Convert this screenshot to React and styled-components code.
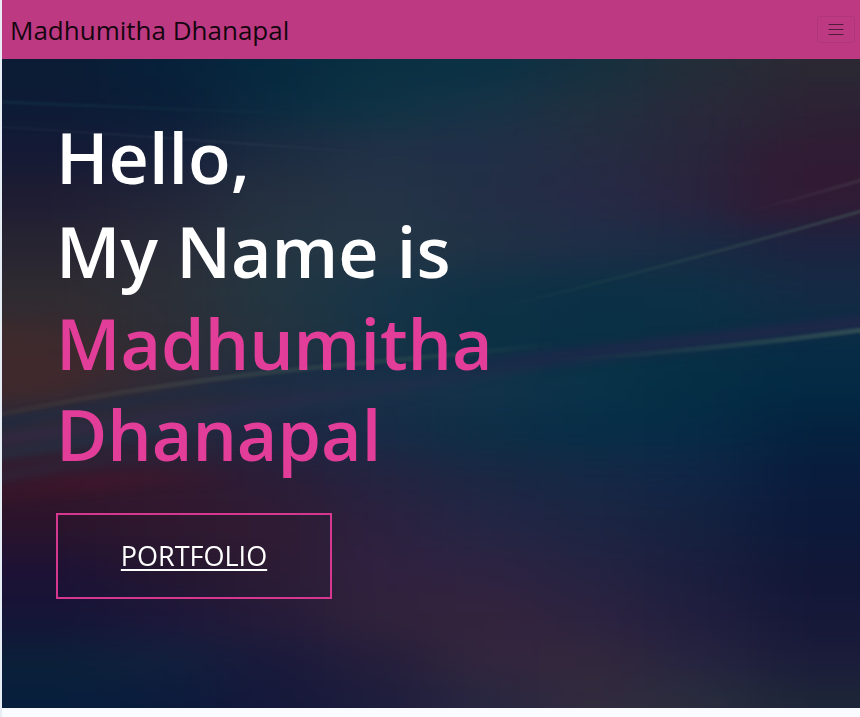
import React from "react";
import styled, { createGlobalStyle } from "styled-components";

const GlobalStyle = createGlobalStyle`
  *, *::before, *::after { box-sizing: border-box; }
  body {
    margin: 0;
    background: #f9fbfe;
    font-family: "Segoe UI", "Open Sans", "Noto Sans", sans-serif;
  }
`;

const Page = styled.div`
  display: flex;
  flex-direction: column;
  min-height: 100vh;
  border-left: 2px solid #e6edf5;
`;

const Navbar = styled.nav`
  display: flex;
  align-items: center;
  justify-content: space-between;
  min-height: 59px;
  padding: 8px 5px 8px 8px;
  background: #bd3a83;
`;

const Brand = styled.a`
  color: #15060f;
  font-size: 26px;
  line-height: 40px;
  text-decoration: none;
  white-space: nowrap;
`;

const Toggler = styled.button`
  display: flex;
  align-items: center;
  justify-content: center;
  width: 38px;
  height: 27px;
  padding: 0;
  background: transparent;
  border: 1px solid #ae3679;
  border-radius: 3px;
  color: #4f1b39;
  cursor: pointer;
`;

const Hero = styled.main`
  position: relative;
  flex: 1;
  overflow: hidden;
  padding: 51px 54px 96px;
  background: #1c2540;
`;

const Backdrop = styled.svg`
  position: absolute;
  inset: 0;
  width: 100%;
  height: 100%;
`;

const Content = styled.div`
  position: relative;
  display: flex;
  flex-direction: column;
  align-items: flex-start;
  max-width: 520px;
`;

const Title = styled.h1`
  margin: 0 0 33px;
  color: #fff;
  font-size: 70px;
  font-weight: 600;
  line-height: 94px;
`;

const Line = styled.span`
  display: block;
`;

const Name = styled.span`
  display: block;
  color: #e23e99;
  line-height: 91px;
`;

const PortfolioLink = styled.a`
  display: inline-flex;
  align-items: center;
  justify-content: center;
  min-width: 276px;
  padding: 20px 60px;
  border: 2px solid #d6388f;
  color: #fff;
  font-size: 27px;
  line-height: 42px;
  text-decoration: underline;
  text-decoration-thickness: 2px;
  text-underline-offset: 3px;
`;

const NextSection = styled.div`
  height: 9px;
  background: #f9fbfe;
`;

const columns = [0, 54, 161, 268, 375, 483, 590, 697, 804, 858];

/* Each row: vertical centre of the band, then its colours from left to right. */
const bands = [
  [10, "#0c1c34", "#07203a", "#06293f", "#0a3042", "#0a3145", "#15303f", "#232d38", "#2b2833"],
  [46, "#0d1b36", "#0a1e38", "#0a2a40", "#0e3344", "#173246", "#20303f", "#28293a", "#2c2234"],
  [92, "#141a35", "#151f3a", "#1c2b40", "#213046", "#202f47", "#252c42", "#28263b", "#2e1f35"],
  [139, "#1f1c33", "#222538", "#243040", "#243446", "#222f46", "#262a46", "#2a233e", "#301c35"],
  [186, "#272432", "#2a2b38", "#253441", "#253746", "#203145", "#1e2e46", "#1a2a43", "#1c2340"],
  [232, "#2f2b31", "#2c2f37", "#233641", "#173447", "#0f3145", "#0b3045", "#0c3045", "#152a44"],
  [279, "#382b30", "#2d2d36", "#24333f", "#163346", "#0b3144", "#0a3045", "#0a2f45", "#0a2c45"],
  [325, "#3c292e", "#302b36", "#202d43", "#1a3047", "#13334a", "#093248", "#042e44", "#032a44"],
  [372, "#272a3b", "#24293e", "#1f2843", "#172b46", "#0d2e46", "#072e47", "#062b46", "#04223f"],
  [418, "#37162a", "#34192e", "#2b1c37", "#242340", "#1b2743", "#152845", "#102545", "#091c3d"],
  [465, "#2a142b", "#2f182f", "#301b33", "#2b213f", "#242544", "#1c2543", "#14213f", "#0c193a"],
  [511, "#1d1235", "#24162f", "#2c1b33", "#302140", "#2d2341", "#242341", "#1b1e3e", "#111737"],
  [558, "#151437", "#1c173a", "#251b39", "#30223b", "#34233d", "#2c2340", "#201e3e", "#161838"],
  [604, "#0b2039", "#11203d", "#19193b", "#241e3b", "#32263d", "#33273c", "#252440", "#1b1c3a"],
  [640, "#071f3c", "#0b1b3c", "#15183b", "#1d1d3c", "#282640", "#322b3e", "#292d3d", "#1d2638"],
];

function AuroraBackdrop() {
  const cells = [];
  bands.forEach(([y, ...colours], row) => {
    const top = row === 0 ? -80 : (bands[row - 1][0] + y) / 2;
    const bottom = row === bands.length - 1 ? 740 : (bands[row + 1][0] + y) / 2;
    colours.forEach((fill, i) => {
      const left = i === 0 ? -120 : (columns[i] + columns[i + 1]) / 2;
      const right = i === 7 ? 980 : (columns[i + 1] + columns[i + 2]) / 2;
      cells.push(
        <rect key={`${row}-${i}`} x={left} y={top} width={right - left + 1} height={bottom - top + 1} fill={fill} />
      );
    });
  });
  return (
    <Backdrop viewBox="0 0 858 649" preserveAspectRatio="none" aria-hidden="true">
      <defs>
        <filter id="field" filterUnits="userSpaceOnUse" x="-120" y="-80" width="1100" height="820" colorInterpolationFilters="sRGB">
          <feGaussianBlur stdDeviation="38 17" />
        </filter>
        <filter id="haze" filterUnits="userSpaceOnUse" x="-80" y="-50" width="1000" height="760" colorInterpolationFilters="sRGB">
          <feGaussianBlur stdDeviation="20 9" />
        </filter>
        <filter id="soft" filterUnits="userSpaceOnUse" x="-50" y="-50" width="960" height="760" colorInterpolationFilters="sRGB">
          <feGaussianBlur stdDeviation="4" />
        </filter>
        <filter id="fine" filterUnits="userSpaceOnUse" x="-50" y="-50" width="960" height="760" colorInterpolationFilters="sRGB">
          <feGaussianBlur stdDeviation="1" />
        </filter>
        <linearGradient id="rayRight" gradientUnits="userSpaceOnUse" x1="460" y1="0" x2="858" y2="0">
          <stop offset="0" stopColor="#35604f" stopOpacity="0" />
          <stop offset="1" stopColor="#4c6960" stopOpacity="0.7" />
        </linearGradient>
        <linearGradient id="rayLow" gradientUnits="userSpaceOnUse" x1="550" y1="0" x2="858" y2="0">
          <stop offset="0" stopColor="#35604f" stopOpacity="0" />
          <stop offset="1" stopColor="#4c6960" stopOpacity="0.7" />
        </linearGradient>
        <linearGradient id="rayCorner" gradientUnits="userSpaceOnUse" x1="740" y1="0" x2="858" y2="0">
          <stop offset="0" stopColor="#4b4053" stopOpacity="0" />
          <stop offset="1" stopColor="#4b4053" stopOpacity="0.7" />
        </linearGradient>
        <linearGradient id="rayLeft" gradientUnits="userSpaceOnUse" x1="0" y1="0" x2="560" y2="0">
          <stop offset="0" stopColor="#5a4a42" stopOpacity="0.25" />
          <stop offset="0.35" stopColor="#4a5551" stopOpacity="0.5" />
          <stop offset="0.75" stopColor="#2c5350" stopOpacity="0.6" />
          <stop offset="1" stopColor="#2c5350" stopOpacity="0" />
        </linearGradient>
        <linearGradient id="rayTop" gradientUnits="userSpaceOnUse" x1="0" y1="0" x2="400" y2="0">
          <stop offset="0" stopColor="#465263" stopOpacity="0.3" />
          <stop offset="0.6" stopColor="#465263" stopOpacity="0.5" />
          <stop offset="1" stopColor="#465263" stopOpacity="0" />
        </linearGradient>
        <linearGradient id="tealTop" gradientUnits="userSpaceOnUse" x1="0" y1="0" x2="380" y2="0">
          <stop offset="0" stopColor="#184352" stopOpacity="0.4" />
          <stop offset="1" stopColor="#184352" stopOpacity="0" />
        </linearGradient>
        <linearGradient id="fadeTeal" gradientUnits="userSpaceOnUse" x1="0" y1="0" x2="480" y2="0">
          <stop offset="0" stopColor="#203b50" stopOpacity="0.5" />
          <stop offset="1" stopColor="#203b50" stopOpacity="0" />
        </linearGradient>
        <linearGradient id="fadePlum" gradientUnits="userSpaceOnUse" x1="0" y1="0" x2="240" y2="0">
          <stop offset="0" stopColor="#2c2b40" stopOpacity="0.6" />
          <stop offset="1" stopColor="#2c2b40" stopOpacity="0" />
        </linearGradient>
        <linearGradient id="fadeWine" gradientUnits="userSpaceOnUse" x1="0" y1="0" x2="240" y2="0">
          <stop offset="0" stopColor="#4a152b" stopOpacity="0.1" />
          <stop offset="0.4" stopColor="#4a152b" stopOpacity="0.4" />
          <stop offset="1" stopColor="#4a152b" stopOpacity="0" />
        </linearGradient>
        <linearGradient id="violetFade" gradientUnits="userSpaceOnUse" x1="0" y1="0" x2="858" y2="0">
          <stop offset="0" stopColor="#3c2b49" stopOpacity="0.7" />
          <stop offset="0.5" stopColor="#292a4c" stopOpacity="0.55" />
          <stop offset="1" stopColor="#26244a" stopOpacity="0" />
        </linearGradient>
        <linearGradient id="indigoRight" gradientUnits="userSpaceOnUse" x1="400" y1="0" x2="858" y2="0">
          <stop offset="0" stopColor="#1c284a" stopOpacity="0" />
          <stop offset="0.3" stopColor="#1c284a" stopOpacity="0.9" />
          <stop offset="1" stopColor="#26264a" stopOpacity="0.8" />
        </linearGradient>
      </defs>
      <g filter="url(#field)">{cells}</g>
      <path d="M-60 262 L60 270 L120 300 L70 330 L-60 350Z" fill="#4b2928" opacity="0.3" filter="url(#haze)" />
      <path d="M740 90 L920 60 L920 130 L740 168Z" fill="#331a34" opacity="0.5" filter="url(#haze)" />
      <g filter="url(#soft)" fill="none">
        <path d="M-10 365 Q210 325 460 301 T870 262" stroke="#162a46" strokeWidth="9" opacity="0.5" />
        <path d="M-10 382 C150 358 300 342 460 318 S700 294 870 271" stroke="url(#violetFade)" strokeWidth="7" />
        <path d="M-10 397 Q120 376 270 354 T480 323" stroke="url(#fadeTeal)" strokeWidth="8" />
        <path d="M-10 420 Q80 400 240 391" stroke="url(#fadePlum)" strokeWidth="10" />
        <path d="M-10 439 Q90 417 240 417" stroke="url(#fadeWine)" strokeWidth="16" />
        <path d="M400 317 Q620 289 870 262" stroke="url(#indigoRight)" strokeWidth="11" />
      </g>
      <g filter="url(#fine)" fill="none">
        <path d="M-10 357 Q160 322 350 305 T570 282" stroke="url(#rayLeft)" strokeWidth="5" opacity="0.75" />
        <path d="M470 255 Q650 212 860 152" stroke="url(#rayRight)" strokeWidth="3" opacity="0.65" />
        <path d="M740 154 Q800 139 860 121" stroke="url(#rayCorner)" strokeWidth="3" opacity="0.7" />
        <path d="M550 302 Q710 291 860 271" stroke="url(#rayLow)" strokeWidth="5" opacity="0.75" />
        <path d="M0 43 Q210 52 380 57" stroke="url(#tealTop)" strokeWidth="3" />
        <path d="M0 68 Q170 79 400 96" stroke="url(#rayTop)" strokeWidth="1" />
      </g>
    </Backdrop>
  );
}

export default function App() {
  return (
    <>
      <GlobalStyle />
      <Page>
        <Navbar aria-label="Main">
          <Brand href="#home">Madhumitha Dhanapal</Brand>
          <Toggler type="button" aria-label="Toggle navigation">
            <svg width="16" height="14" viewBox="0 0 16 14" stroke="currentColor" strokeWidth="1" strokeLinecap="round" aria-hidden="true">
              <path d="M1 1.5h14M1 6.5h14M1 11.5h14" />
            </svg>
          </Toggler>
        </Navbar>
        <Hero id="home">
          <AuroraBackdrop />
          <Content>
            <Title>
              <Line>Hello,</Line>
              <Line>My Name is</Line>
              <Name>Madhumitha Dhanapal</Name>
            </Title>
            <PortfolioLink href="#portfolio">PORTFOLIO</PortfolioLink>
          </Content>
        </Hero>
        <NextSection />
      </Page>
    </>
  );
}
